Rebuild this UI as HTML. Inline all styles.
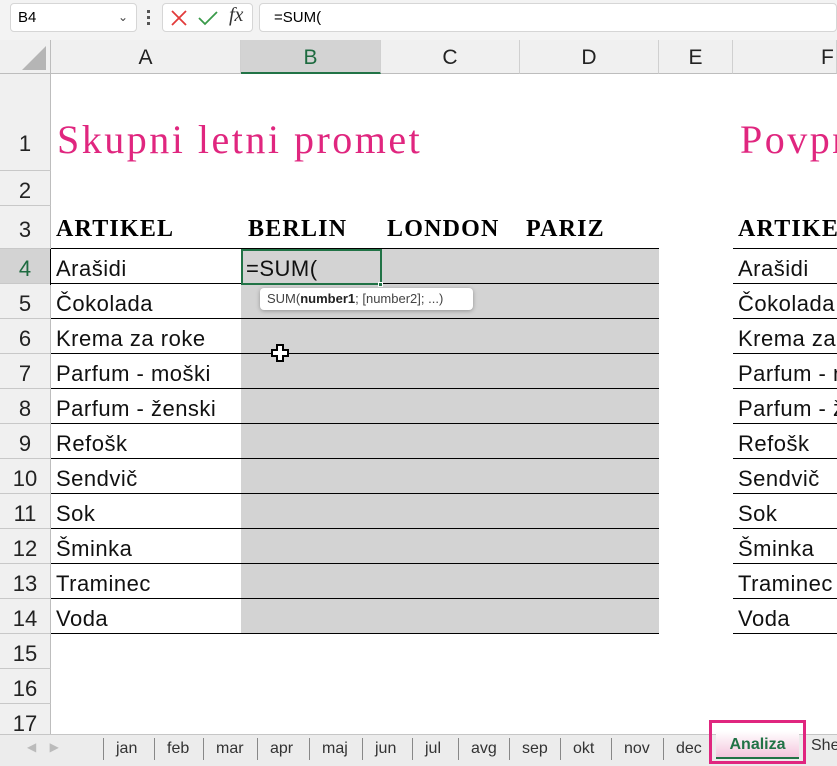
<!DOCTYPE html>
<html><head><meta charset="utf-8"><style>
*{margin:0;padding:0;box-sizing:border-box}
html,body{width:837px;height:766px;overflow:hidden}
body{background:#fff;font-family:"Liberation Sans",sans-serif;position:relative}
.a{position:absolute}
.top{left:0;top:0;width:837px;height:40px;background:#f3f3f3}
.box{background:#fff;border:1px solid #d6d6d6;border-radius:4px}
.colh{top:40px;height:34px;background:#f0f0f0;border-bottom:1px solid #bdbdbd;border-right:1px solid #d0d0d0;text-align:center;font-size:21px;line-height:36px;color:#222}
.rowh{left:0;width:51px;background:#f0f0f0;border-right:1px solid #bdbdbd;border-bottom:1px solid #c8c8c8;text-align:center;font-size:22px;color:#222}
.cell{font-size:22px;color:#111;line-height:35px;white-space:nowrap;letter-spacing:0.5px}
.hd{font-family:"Liberation Serif",serif;font-weight:bold;font-size:24px;letter-spacing:1.2px;color:#000;white-space:nowrap}
.t{font-family:"Liberation Serif",serif;font-size:40px;letter-spacing:2.5px;color:#e0267f;white-space:nowrap}
.hl{height:1px;background:#000}
.tabs{left:0;top:734px;width:837px;height:32px;background:#ececec;border-top:1px solid #c6c6c6}
.tab{top:4px;font-size:16px;color:#333;height:22px;line-height:22px;border-left:1px solid #888;padding:0 12px}
#clip{position:absolute;left:0;top:0;width:837px;height:766px;overflow:hidden}
</style></head><body><div id="clip">
<div class="a top"></div>
<div class="a box" style="left:10px;top:3px;width:127px;height:29px;font-size:15px;line-height:27px;padding-left:7px">B4<span class="a" style="right:8px;top:0;font-size:12px;color:#444">&#8964;</span></div>
<div class="a" style="left:147px;top:10px;width:3px;height:3px;background:#555;box-shadow:0 6px #555,0 12px #555"></div>
<div class="a box" style="left:162px;top:3px;width:91px;height:29px"></div>
<svg class="a" style="left:170px;top:9px" width="18" height="18"><path d="M2 2L16 16M16 2L2 16" stroke="#e23a3a" stroke-width="1.8"/></svg>
<svg class="a" style="left:197px;top:9px" width="22" height="18"><path d="M2 9L8 15L20 3" stroke="#3a9a4a" stroke-width="1.8" fill="none"/></svg>
<div class="a" style="left:229px;top:4px;font-family:'Liberation Serif',serif;font-style:italic;font-size:20px;color:#333">fx</div>
<div class="a box" style="left:259px;top:3px;width:578px;height:29px;font-size:15px;line-height:27px;padding-left:14px">=SUM(</div>

<div class="a" style="left:0;top:40px;width:51px;height:34px;background:#f0f0f0;border-right:1px solid #bdbdbd;border-bottom:1px solid #bdbdbd"></div>
<svg class="a" style="left:20px;top:44px" width="28" height="28"><path d="M26 2L26 26L2 26Z" fill="#b5b5b5"/></svg>
<div class="a colh" style="left:51px;width:190px">A</div>
<div class="a colh" style="left:241px;width:140px;background:#d3d3d3;border-bottom:2px solid #217346;color:#1e6b40">B</div>
<div class="a colh" style="left:381px;width:139px">C</div>
<div class="a colh" style="left:520px;width:139px">D</div>
<div class="a colh" style="left:659px;width:74px">E</div>
<div class="a colh" style="left:733px;width:104px;text-align:left;padding-left:88px">F</div>

<div id="rows"></div>
<div class="a" style="left:241px;top:249px;width:418px;height:385px;background:#d3d3d3"></div>
<div class="a t" style="left:57px;top:116px">Skupni letni promet</div>
<div class="a t" style="left:740px;top:116px">Povprečje</div>
<div class="a hd" style="left:56px;top:216px">ARTIKEL</div>
<div class="a hd" style="left:248px;top:216px">BERLIN</div>
<div class="a hd" style="left:387px;top:216px">LONDON</div>
<div class="a hd" style="left:526px;top:216px">PARIZ</div>
<div class="a hd" style="left:738px;top:216px">ARTIKEL</div>
<div id="items"></div>
<div id="g"></div>
<div class="a" style="left:241px;top:249px;width:141px;height:36px;border:2px solid #217346"></div>
<div class="a" style="left:378px;top:282px;width:5px;height:5px;background:#217346;border:1px solid #fff"></div>
<div class="a cell" style="left:246px;top:251px">=SUM(</div>
<div class="a" style="left:260px;top:288px;width:213px;height:22px;background:#fff;border-radius:4px;box-shadow:0 1px 4px rgba(0,0,0,.3);font-size:13px;line-height:22px;padding-left:7px;color:#444">SUM(<b style="color:#222">number1</b>; [number2]; ...)</div>
<svg class="a" style="left:271px;top:344px" width="18" height="18"><path d="M6 1H12V6H17V12H12V17H6V12H1V6H6Z" fill="#fff" stroke="#000" stroke-width="2"/></svg>

<div class="a tabs"></div>
<div class="a" style="left:27px;top:740px;font-size:12px;color:#bbb">&#9664;&nbsp;&nbsp;&nbsp;&nbsp;&#9654;</div>
<div id="tb"></div>
<div class="a" style="left:709px;top:720px;width:97px;height:44px;border:3px solid #e0267f"></div>
<div class="a" style="left:716px;top:731px;width:83px;height:28px;background:linear-gradient(#fff,#f4c6dd);border-bottom:2px solid #217346;text-align:center;font-weight:bold;font-size:16px;line-height:28px;color:#217346">Analiza</div>
<div class="a" style="left:811px;top:737px;font-size:16px;color:#333">Sheet</div>
</div>
<script>
var h='',tops=[74,171,206,249,284,319,354,389,424,459,494,529,564,599,634,669,704,739];
for(var i=0;i<17;i++){var y=tops[i],hh=tops[i+1]-y;var sel=i==3;
h+='<div class="a rowh" style="top:'+y+'px;height:'+hh+'px;line-height:'+(i==0?hh+42:hh+4)+'px;'+(sel?'background:#d3d3d3;color:#1e6b40':'')+'">'+(i+1)+'</div>';}
document.getElementById('rows').innerHTML=h;
var items=['Arašidi','Čokolada','Krema za roke','Parfum - moški','Parfum - ženski','Refošk','Sendvič','Sok','Šminka','Traminec','Voda'],it='';
for(var j=0;j<11;j++){var y=tops[j+3]+2;
it+='<div class="a cell" style="left:56px;top:'+y+'px">'+items[j]+'</div>';
it+='<div class="a cell" style="left:738px;top:'+y+'px">'+items[j]+'</div>';}
document.getElementById('items').innerHTML=it;
var g='';for(var k=3;k<=14;k++){var y=tops[k]-1;
g+='<div class="a hl" style="left:51px;top:'+y+'px;width:608px"></div><div class="a hl" style="left:733px;top:'+y+'px;width:104px"></div>';}
g+='<div class="a" style="left:50px;top:249px;width:1px;height:36px;background:#000"></div>';
document.getElementById('g').innerHTML=g;
var tabs=[['jan',103],['feb',154],['mar',203],['apr',257],['maj',309],['jun',362],['jul',412],['avg',458],['sep',509],['okt',560],['nov',611],['dec',663]],t='';
tabs.forEach(function(a){t+='<div class="a tab" style="left:'+a[1]+'px;top:738px">'+a[0]+'</div>'});
document.getElementById('tb').innerHTML=t;
</script>
</body></html>
